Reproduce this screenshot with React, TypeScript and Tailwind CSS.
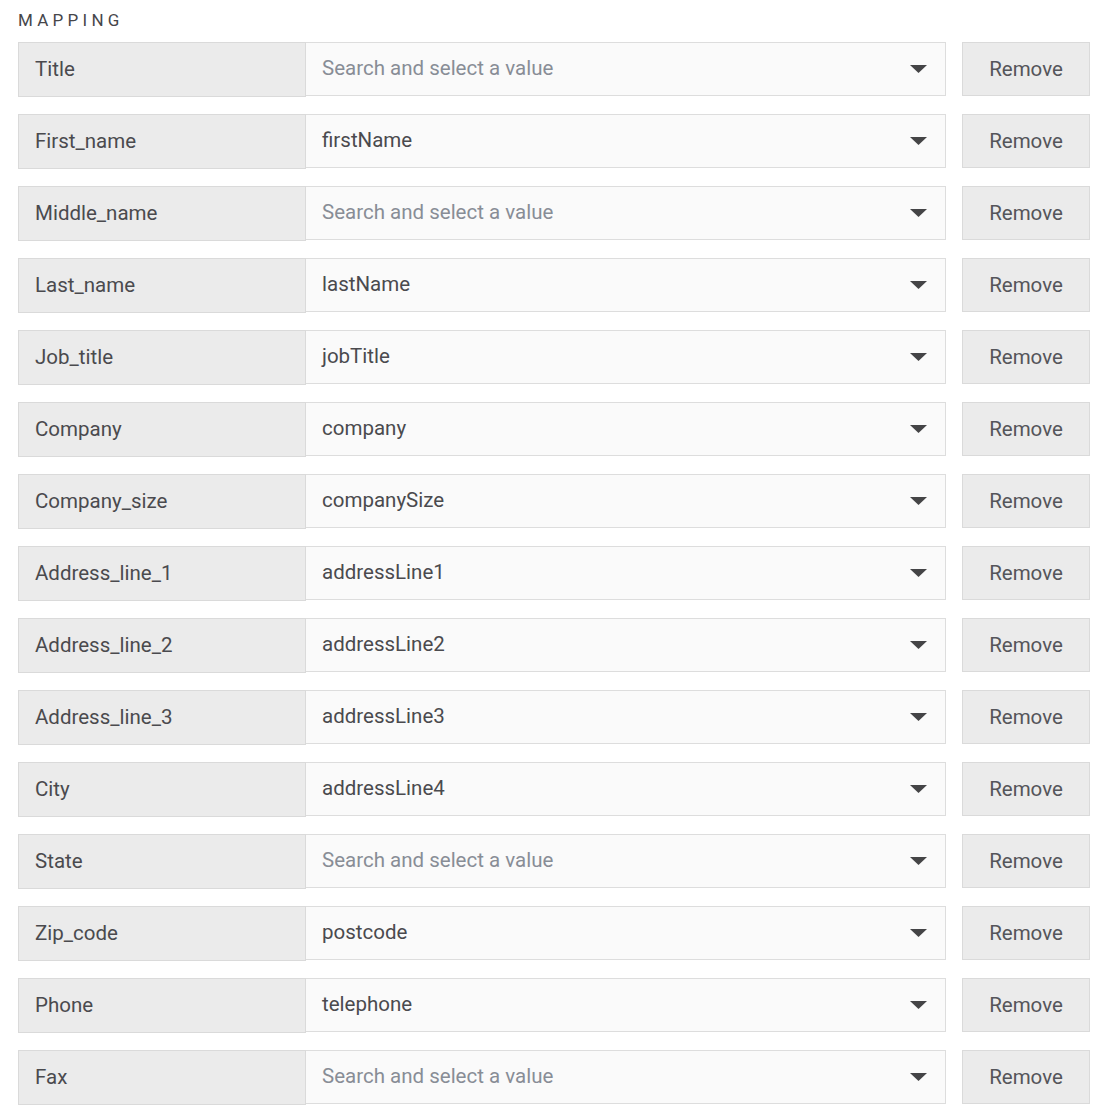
import React from "react";

type Row = { field: string; value?: string };

const rows: Row[] = [
  { field: "Title" },
  { field: "First_name", value: "firstName" },
  { field: "Middle_name" },
  { field: "Last_name", value: "lastName" },
  { field: "Job_title", value: "jobTitle" },
  { field: "Company", value: "company" },
  { field: "Company_size", value: "companySize" },
  { field: "Address_line_1", value: "addressLine1" },
  { field: "Address_line_2", value: "addressLine2" },
  { field: "Address_line_3", value: "addressLine3" },
  { field: "City", value: "addressLine4" },
  { field: "State" },
  { field: "Zip_code", value: "postcode" },
  { field: "Phone", value: "telephone" },
  { field: "Fax" },
];

function Caret() {
  return (
    <svg width="17" height="8" viewBox="0 0 17 8" className="shrink-0">
      <path d="M0 0 H17 L8.5 8 Z" fill="#444446" />
    </svg>
  );
}

function MappingRow({ field, value }: Row) {
  return (
    <div className="flex items-start">
      <div className="flex h-[55px] w-[288px] shrink-0 items-center border border-[#dadada] bg-[#ebebeb] pl-[16px] text-[20.5px] text-[#4a4a4e]">
        {field}
      </div>
      <div className="flex h-[54px] w-[640px] shrink-0 items-center justify-between border border-l-0 border-[#dddddd] bg-[#fafafa] pl-[16px] pr-[18px]">
        <span
          className={
            value
              ? "-mt-[1px] text-[20.5px] text-[#4a4a4e]"
              : "-mt-[1px] text-[20.5px] text-[#888d96]"
          }
        >
          {value ?? "Search and select a value"}
        </span>
        <Caret />
      </div>
      <button className="ml-[16px] flex h-[54px] w-[128px] shrink-0 items-center justify-center border border-[#dadada] bg-[#ebebeb] text-[20.5px] text-[#55555a]">
        Remove
      </button>
    </div>
  );
}

export default function App() {
  return (
    <div
      className="min-h-[1118px] w-[1106px] bg-white pl-[18px] pt-[10px]"
      style={{ fontFamily: "Roboto, 'Noto Sans', sans-serif" }}
    >
      <div className="mb-[12px] text-[17px] leading-[20px] tracking-[0.25em] text-[#46464a]">
        MAPPING
      </div>
      <div className="flex flex-col gap-[17px]">
        {rows.map((r) => (
          <MappingRow key={r.field} {...r} />
        ))}
      </div>
    </div>
  );
}
